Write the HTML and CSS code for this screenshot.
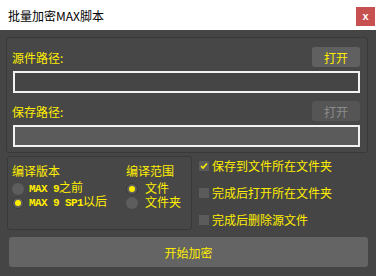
FILE: index.html
```html
<!DOCTYPE html>
<html lang="zh-CN">

<head>
    <meta charset="UTF-8">
    <meta name="viewport" content="width=device-width, initial-scale=1.0">
    <title>批量加密MAX脚本</title>
    <link rel="stylesheet" href="styles.css">
</head>

<body>
    <div class="titlebar">
        <span class="title">批量加密MAX脚本</span>
        <button class="close-btn">x</button>
    </div>

    <div class="main">
        <div class="group paths">
            <div class="path-row">
                <span class="label">源件路径:</span>
                <button class="small-btn">打开</button>
            </div>
            <div class="path-input"></div>

            <div class="path-row second">
                <span class="label">保存路径:</span>
                <button class="small-btn disabled">打开</button>
            </div>
            <div class="path-input filled"></div>
        </div>

        <div class="lower">
            <div class="group options">
                <div class="col version">
                    <div class="col-title">编译版本</div>
                    <div class="radio-row"><span class="radio"></span><span class="radio-text"><span class="mono">MAX 9</span>之前</span></div>
                    <div class="radio-row"><span class="radio checked"></span><span class="radio-text"><span class="mono">MAX 9 SP1</span>以后</span></div>
                </div>
                <div class="col scope">
                    <div class="col-title">编译范围</div>
                    <div class="radio-row"><span class="radio checked"></span><span class="radio-text">文件</span></div>
                    <div class="radio-row"><span class="radio"></span><span class="radio-text">文件夹</span></div>
                </div>
            </div>

            <div class="checks">
                <div class="check-row">
                    <span class="checkbox checked">
                        <svg width="10" height="10" viewBox="0 0 10 10">
                            <path d="M2 5 L4 7 L8 2.5" fill="none" stroke="#ffee00" stroke-width="1.6" />
                        </svg>
                    </span>
                    <span>保存到文件所在文件夹</span>
                </div>
                <div class="check-row">
                    <span class="checkbox"></span>
                    <span>完成后打开所在文件夹</span>
                </div>
                <div class="check-row">
                    <span class="checkbox"></span>
                    <span>完成后删除源文件</span>
                </div>
            </div>
        </div>

        <button class="start-btn">开始加密</button>
    </div>
</body>

</html>
```

FILE: styles.css
```css
body {
    margin: 0;
    background: #454545;
    font-family: "Noto Sans CJK SC", "Liberation Sans", sans-serif;
    font-size: 12px;
    color: #ffee00;
}

button {
    font-family: inherit;
    font-size: 12px;
    border: none;
    padding: 0;
    cursor: pointer;
}

/* barra de título */
.titlebar {
    height: 30px;
    background: #ffffff;
    display: flex;
    align-items: center;
    padding-left: 8px;
}

.title {
    color: #000000;
    font-size: 12px;
}

.close-btn {
    margin-left: auto;
    align-self: flex-start;
    margin-top: 7px;
    margin-right: 1px;
    width: 19px;
    height: 19px;
    background: #c75050;
    color: #ffffff;
    font-family: "Liberation Sans", sans-serif;
    font-weight: bold;
    font-size: 11px;
    line-height: 17px;
}

.main {
    padding: 7px 8px 0 6px;
}

.group {
    border: 1px solid #393939;
    border-radius: 3px;
    background: #474747;
}

/* caminhos */
.paths {
    padding: 9px 7px 5px 6px;
}

.path-row {
    display: flex;
    justify-content: space-between;
    align-items: center;
    height: 20px;
}

.path-row.second {
    margin-top: 8px;
}

.label {
    margin-left: -1px;
}

.small-btn {
    width: 48px;
    height: 20px;
    background: #606060;
    color: #ffee00;
    border-radius: 3px;
}

.small-btn.disabled {
    background: #555555;
    color: #8c8c8c;
}

.path-input {
    margin-top: 4px;
    height: 18px;
    border: 2px solid #f2f2f2;
    background: #454545;
}

.path-input.filled {
    background: #5b5b5b;
}

/* opções */
.lower {
    display: flex;
    margin-top: 3px;
}

.options {
    margin-left: 1px;
    width: 185px;
    height: 74px;
    padding: 7px 0 0 4px;
    display: flex;
    box-sizing: border-box;
}

.col.version {
    width: 114px;
}

.col-title {
    height: 14px;
    line-height: 14px;
    margin-bottom: 3px;
}

.radio-row {
    display: flex;
    align-items: center;
    height: 14px;
}

.radio-text {
    line-height: 14px;
    white-space: nowrap;
}

.radio {
    flex: none;
    width: 12px;
    height: 12px;
    border-radius: 50%;
    background: #5d5d5d;
    margin: 1px 5px 0 0;
    box-sizing: border-box;
    display: flex;
    align-items: center;
    justify-content: center;
}

.radio.checked {
    border: 1px solid #3a3a3a;
}

.radio.checked::after {
    content: "";
    width: 6px;
    height: 6px;
    border-radius: 50%;
    background: #ffee00;
}

.scope .radio {
    margin-right: 7px;
}

.mono {
    font-family: "Liberation Mono", monospace;
    font-weight: bold;
    font-size: 11px;
    letter-spacing: -0.6px;
    white-space: pre;
}

.checks {
    margin-left: 7px;
    padding-top: 3px;
    display: flex;
    flex-direction: column;
    gap: 13px;
}

.check-row {
    display: flex;
    align-items: center;
    height: 14px;
    line-height: 14px;
}

.checkbox {
    width: 10px;
    height: 10px;
    background: #5b5b5b;
    margin-right: 3px;
    display: flex;
}

.start-btn {
    display: block;
    margin: 7px 0 0 3px;
    width: 359px;
    height: 30px;
    background: #646464;
    color: #ffee00;
    border-radius: 3px;
}
```
